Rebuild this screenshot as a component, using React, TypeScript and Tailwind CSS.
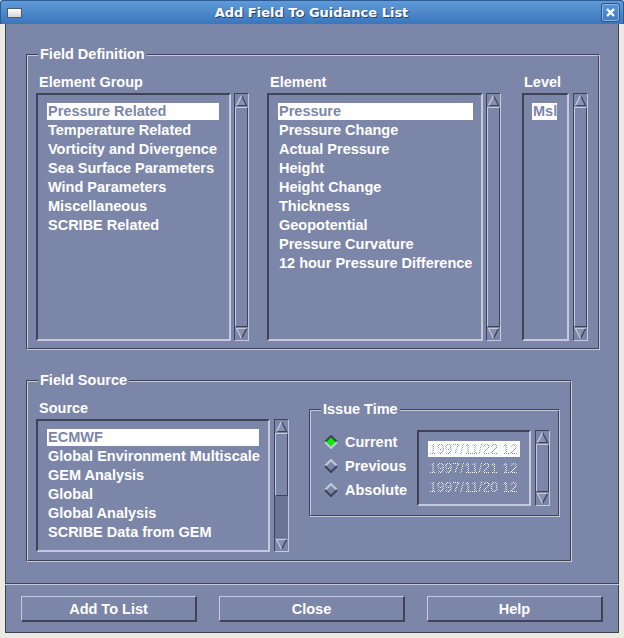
import React from 'react';

const groups = [
  'Pressure Related',
  'Temperature Related',
  'Vorticity and Divergence',
  'Sea Surface Parameters',
  'Wind Parameters',
  'Miscellaneous',
  'SCRIBE Related',
];

const elements = [
  'Pressure',
  'Pressure Change',
  'Actual Pressure',
  'Height',
  'Height Change',
  'Thickness',
  'Geopotential',
  'Pressure Curvature',
  '12 hour Pressure Difference',
];

const sources = [
  'ECMWF',
  'Global Environment Multiscale',
  'GEM Analysis',
  'Global',
  'Global Analysis',
  'SCRIBE Data from GEM',
];

const times = ['1997/11/22 12', '1997/11/21 12', '1997/11/20 12'];

function Arrow({ dir }: { dir: 'up' | 'down' }) {
  if (dir === 'up') {
    return (
      <svg width="13" height="13" viewBox="0 0 13 13" className="block shrink-0">
        <polygon points="6.5,1.5 11.5,11.5 1.5,11.5" fill="#8891b1" />
        <polyline points="6.5,1.5 11.5,11.5 1.5,11.5" fill="none" stroke="#3e4357" strokeWidth="1.2" />
        <polyline points="1.5,11.5 6.5,1.5" fill="none" stroke="#c4c9dc" strokeWidth="1.4" />
      </svg>
    );
  }
  return (
    <svg width="13" height="13" viewBox="0 0 13 13" className="block shrink-0">
      <polygon points="1.5,1.5 11.5,1.5 6.5,11.5" fill="#8891b1" />
      <polyline points="11.5,1.5 6.5,11.5" fill="none" stroke="#3e4357" strokeWidth="1.4" />
      <polyline points="6.5,11.5 1.5,1.5 11.5,1.5" fill="none" stroke="#c4c9dc" strokeWidth="1.2" />
    </svg>
  );
}

// thumb: extra classes for a slider that doesn't fill the trough
function ScrollBar({ className, thumb }: { className: string; thumb?: string }) {
  return (
    <div
      className={`flex w-[15px] shrink-0 flex-col border border-t-[#3e4357] border-l-[#3e4357] border-b-[#c4c9dc] border-r-[#c4c9dc] ${className}`}
    >
      <Arrow dir="up" />
      {thumb ? (
        <div className="flex flex-1 flex-col bg-[#6a7394]">
          <div
            className={`border border-t-[#c4c9dc] border-l-[#c4c9dc] border-b-[#3e4357] border-r-[#3e4357] bg-[#7c86a8] ${thumb}`}
          />
        </div>
      ) : (
        <div className="flex-1 border border-t-[#c4c9dc] border-l-[#c4c9dc] border-b-[#3e4357] border-r-[#3e4357]" />
      )}
      <Arrow dir="down" />
    </div>
  );
}

function ListBox({ items, className }: { items: string[]; className: string }) {
  return (
    <div
      className={`flex flex-col gap-[2px] overflow-hidden border-2 border-t-[#3e4357] border-l-[#3e4357] border-b-[#c4c9dc] border-r-[#c4c9dc] pt-[8px] ${className}`}
    >
      {items.map((it, i) => (
        <div
          key={it}
          className={`h-[17px] shrink-0 whitespace-nowrap pl-[1px] leading-[17px] ${
            i === 0 ? 'bg-white text-[#7c86a8]' : 'text-white'
          }`}
        >
          {it}
        </div>
      ))}
    </div>
  );
}

function Frame({
  title,
  className,
  children,
}: {
  title: string;
  className: string;
  children: React.ReactNode;
}) {
  return (
    <div
      className={`relative shrink-0 border border-t-[#3e4357] border-l-[#3e4357] border-b-[#c4c9dc] border-r-[#c4c9dc] ${className}`}
    >
      <div className="h-full border border-t-[#c4c9dc] border-l-[#c4c9dc] border-b-[#3e4357] border-r-[#3e4357]">
        {children}
      </div>
      <div className="absolute left-[11px] top-[-9px] bg-[#7c86a8] px-[2px] leading-[17px] text-white">
        {title}
      </div>
    </div>
  );
}

function Diamond({ on }: { on?: boolean }) {
  const top = on ? '#3e4357' : '#c4c9dc';
  const bot = on ? '#c4c9dc' : '#3e4357';
  return (
    <svg width="14" height="14" viewBox="0 0 14 14" className="block shrink-0">
      <polygon points="7,1 13,7 7,13 1,7" fill={on ? '#00f000' : '#7c86a8'} />
      <polyline points="1,7 7,1 13,7" fill="none" stroke={top} strokeWidth="2" />
      <polyline points="1,7 7,13 13,7" fill="none" stroke={bot} strokeWidth="2" />
    </svg>
  );
}

function Button({ label, className }: { label: string; className: string }) {
  return (
    <button
      className={`h-[26px] border border-t-[#c4c9dc] border-l-[#c4c9dc] border-b-2 border-r-2 border-b-[#3e4357] border-r-[#3e4357] bg-[#7c86a8] text-center leading-[22px] text-white ${className}`}
    >
      {label}
    </button>
  );
}

export default function App() {
  return (
    <div className="flex h-[638px] w-[624px] flex-col bg-[#eceae3] font-['Liberation_Sans',Arial,sans-serif] text-[14.5px] font-bold">
      {/* title bar */}
      <div className="flex h-[24px] shrink-0 items-center rounded-t-[3px] border-x border-t border-[#2d5b94] bg-gradient-to-b from-[#609ad8] to-[#3a76bc]">
        <div className="ml-[6px] h-[10px] w-[15px] border border-[#4a5a70] bg-gradient-to-b from-white to-[#d6d6d6]" />
        <div className="flex-1 text-center font-['DejaVu_Sans',sans-serif] text-[13px] text-white [text-shadow:1px_1px_0_#24456f]">
          Add Field To Guidance List
        </div>
        <div className="mr-[3px] flex h-[19px] w-[19px] items-center justify-center rounded-[3px] border border-[#2a5487] shadow-[inset_0_0_0_1px_#8fb6e2]">
          <svg width="9" height="9" viewBox="0 0 9 9">
            <path d="M1 1 L8 8 M8 1 L1 8" stroke="white" strokeWidth="2.4" />
          </svg>
        </div>
      </div>

      <div className="flex flex-1 flex-col px-[5px] pb-[5px]">
        <div className="flex flex-1 flex-col bg-[#7c86a8] shadow-[inset_1px_0_0_#3e4357,inset_-1px_0_0_#3e4357,inset_0_-1px_0_#3e4357]">
          {/* upper area */}
          <div className="flex h-[559px] shrink-0 flex-col pl-[21px] pt-[30px]">
            <Frame title="Field Definition" className="h-[296px] w-[574px]">
              <div className="flex pl-[8px] pt-[18px]">
                <div className="flex flex-col">
                  <div className="ml-[3px] h-[17px] leading-[17px] text-white">Element Group</div>
                  <div className="mt-[2px] flex gap-[3px]">
                    <ListBox items={groups} className="h-[248px] w-[195px] pl-[9px] pr-[10px]" />
                    <ScrollBar className="h-[248px]" />
                  </div>
                </div>
                <div className="ml-[18px] flex flex-col">
                  <div className="ml-[3px] h-[17px] leading-[17px] text-white">Element</div>
                  <div className="mt-[2px] flex gap-[3px]">
                    <ListBox items={elements} className="h-[248px] w-[216px] pl-[9px] pr-[8px]" />
                    <ScrollBar className="h-[248px]" />
                  </div>
                </div>
                <div className="ml-[21px] flex flex-col">
                  <div className="ml-[2px] h-[17px] leading-[17px] text-white">Level</div>
                  <div className="mt-[2px] flex gap-[4px]">
                    <ListBox items={['Msl']} className="h-[248px] w-[47px] pl-[8px] pr-[10px]" />
                    <ScrollBar className="h-[248px]" />
                  </div>
                </div>
              </div>
            </Frame>

            <Frame title="Field Source" className="mt-[30px] h-[182px] w-[546px]">
              <div className="flex pl-[8px]">
                <div className="flex flex-col pt-[18px]">
                  <div className="ml-[3px] h-[17px] leading-[17px] text-white">Source</div>
                  <div className="mt-[2px] flex gap-[4px]">
                    <ListBox items={sources} className="h-[133px] w-[234px] px-[9px]" />
                    <ScrollBar className="h-[133px]" thumb="h-[63px]" />
                  </div>
                </div>
                <Frame title="Issue Time" className="ml-[20px] mt-[27px] h-[108px] w-[251px]">
                  <div className="flex pl-[13px] pt-[19px]">
                    <div className="flex w-[93px] flex-col">
                      {['Current', 'Previous', 'Absolute'].map((r, i) => (
                        <div key={r} className="flex h-[24px] items-center gap-[7px] text-white">
                          <Diamond on={i === 0} />
                          <span className="leading-[17px]">{r}</span>
                        </div>
                      ))}
                    </div>
                    <div className="flex gap-[4px]">
                      <div className="flex h-[76px] w-[114px] flex-col gap-[3px] border-2 border-t-[#3e4357] border-l-[#3e4357] border-b-[#c4c9dc] border-r-[#c4c9dc] px-[9px] pt-[9px] text-[14px] font-normal">
                        {times.map((t, i) => (
                          <div
                            key={t}
                            className={`h-[16px] whitespace-nowrap pl-[1px] leading-[16px] ${i === 0 ? 'bg-white' : ''}`}
                          >
                            {/* insensitive text: stippled */}
                            <span
                              className={`bg-[length:2px_2px] bg-clip-text text-transparent ${
                                i === 0
                                  ? 'bg-[image:repeating-conic-gradient(#7c86a8_0_25%,#ffffff_0_50%)]'
                                  : 'bg-[image:repeating-conic-gradient(#ffffff_0_25%,#7c86a8_0_50%)]'
                              }`}
                            >
                              {t}
                            </span>
                          </div>
                        ))}
                      </div>
                      <ScrollBar className="h-[76px]" />
                    </div>
                  </div>
                </Frame>
              </div>
            </Frame>
          </div>

          {/* separator + buttons */}
          <div className="h-[2px] shrink-0 border-t border-b border-t-[#3e4357] border-b-[#c4c9dc]" />
          <div className="flex gap-[22px] pl-[16px] pt-[11px]">
            <Button label="Add To List" className="w-[176px]" />
            <Button label="Close" className="w-[186px]" />
            <Button label="Help" className="w-[176px]" />
          </div>
        </div>
      </div>
    </div>
  );
}
